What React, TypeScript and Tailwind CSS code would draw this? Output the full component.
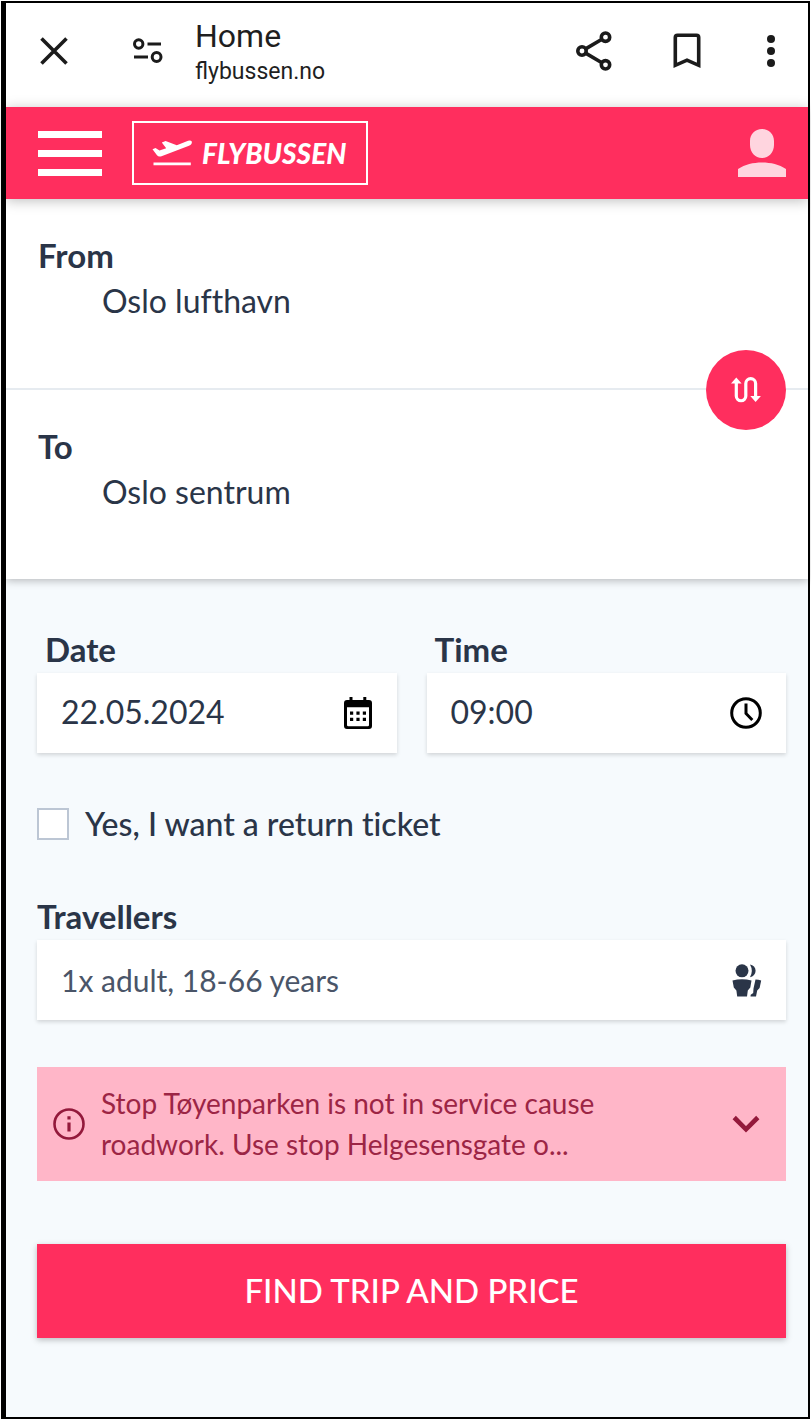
import { useState } from "react";
import type { ReactNode } from "react";

function CloseIcon() {
  return (
    <svg width="28" height="28" viewBox="0 0 28 28" fill="none" stroke="#1b1b1b" strokeWidth="3.6">
      <path d="M1.5 1.5l25 25M26.5 1.5l-25 25" />
    </svg>
  );
}

function SiteSettingsIcon() {
  return (
    <svg width="30" height="26" viewBox="0 0 30 26" fill="none" stroke="#1b1b1b" strokeWidth="3">
      <circle cx="5.7" cy="6" r="4.2" />
      <path d="M14.5 6H28M1 19h14" />
      <circle cx="23.6" cy="19" r="4.4" />
    </svg>
  );
}

function ShareIcon() {
  return (
    <svg width="36" height="40" viewBox="0 0 36 40" fill="none" stroke="#1b1b1b" strokeWidth="3.6">
      <circle cx="6" cy="20" r="4.2" />
      <circle cx="29.5" cy="6.2" r="4.2" />
      <circle cx="29.5" cy="33.8" r="4.2" />
      <path d="M9.6 17.9L25.9 8.3M9.6 22.1l16.3 9.6" />
    </svg>
  );
}

function BookmarkIcon() {
  return (
    <svg width="28" height="36" viewBox="0 0 28 36" fill="none" stroke="#1b1b1b" strokeWidth="3.6">
      <path d="M2.3 32.3V4.4Q2.3 2.2 4.5 2.2h19Q25.7 2.2 25.7 4.4v27.9L14 27.2z" />
    </svg>
  );
}

function MoreIcon() {
  return (
    <svg width="8" height="32" viewBox="0 0 8 32" fill="#1b1b1b">
      <circle cx="4" cy="4" r="4" />
      <circle cx="4" cy="16" r="4" />
      <circle cx="4" cy="28" r="4" />
    </svg>
  );
}

function PlaneIcon() {
  return (
    <svg width="42" height="28" viewBox="0 0 42 28" fill="#fff">
      <path d="M.5 10.200l3-1.200 4 2.600 6.700-2.300-4.400-5.800L13.600 2l11.200 4.200 9.400-3.800Q38.500.8 39.800 2.400q.6 2.600-2.800 4.400L9.500 17.200Q6.500 18.200 4.800 16z" />
      <path d="M1.500 23.500h37.300v2.800H1.500z" />
    </svg>
  );
}

function UserIcon() {
  return (
    <svg width="48" height="48" viewBox="0 0 48 48" fill="#ffd5df">
      <path d="M24 0c7 0 12 5 12 12v4c0 7-5 13-12 13s-12-6-12-13v-4C12 5 17 0 24 0zM0 40c7-4.500 15-6.500 24-6.500S41 35.500 48 40v8H0z" />
    </svg>
  );
}

function SwapIcon() {
  return (
    <svg width="30" height="26" viewBox="0 0 30 26">
      <path
        d="M5.300 4v15a4.700 4.700 0 0 0 9.500 0V6.500a4.900 4.900 0 0 1 9.800 0V21"
        fill="none"
        stroke="#fff"
        strokeWidth="3.200"
      />
      <path d="M0 6.500L5.300.5 10.600 6.500zM19.300 19h10.600L24.600 25z" fill="#fff" />
    </svg>
  );
}

function CalendarIcon() {
  return (
    <svg width="30" height="32" viewBox="0 0 30 32">
      <path
        fillRule="evenodd"
        d="M6.500 0h3v3h10.800V0h3v3H26a3 3 0 0 1 3 3v23a3 3 0 0 1-3 3H4a3 3 0 0 1-3-3V6a3 3 0 0 1 3-3h2.500zM4 10.300V28q0 1.200 1.200 1.200h19.600Q26 29.200 26 28V10.300z"
      />
      <path d="M7 14.500h3.200v3.200H7zM13.400 14.500h3.200v3.200h-3.200zM19.800 14.500H23v3.200h-3.200zM7 20.700h3.200v3.200H7zM13.400 20.700h3.200v3.200h-3.200zM19.800 20.700H23v3.200h-3.200z" />
    </svg>
  );
}

function ClockIcon() {
  return (
    <svg width="32" height="32" viewBox="0 0 32 32" fill="none" stroke="#000" strokeWidth="3">
      <circle cx="16" cy="16" r="14.300" />
      <path d="M16 6.500v10l6.300 6.500" />
    </svg>
  );
}

function TravellersIcon() {
  return (
    <svg width="30" height="33" viewBox="0 0 30 33" fill="#2a3548">
      <circle cx="10" cy="6.800" r="6.500" />
      <path d="M18 .5a6.400 6.400 0 0 1 0 12.700q3.600-6.400 0-12.700z" />
      <path d="M.5 16.400Q10 14.200 19.500 16.400L18.300 23.500 15.800 26.500 15 32.500H5.200L4.400 26.500 1.800 23.500z" />
      <path d="M23.500 15.500q3 0 5.700 1L27.600 24l-2.400 2.500-1.200 6h-5.500l.2-1.800 2.500-1.700.3-4.500z" />
    </svg>
  );
}

function InfoIcon() {
  return (
    <svg width="32" height="32" viewBox="0 0 32 32" className="shrink-0" fill="none" stroke="#93193b">
      <circle cx="16" cy="16" r="14.500" strokeWidth="2.600" />
      <path d="M16 14.500v9M16 8.200v3.300" strokeWidth="3.200" />
    </svg>
  );
}

function ChevronIcon() {
  return (
    <svg width="28" height="18" viewBox="0 0 28 18" fill="none" stroke="#93193b" strokeWidth="4.600">
      <path d="M2.200 2.500L14 14.300 25.800 2.500" />
    </svg>
  );
}

function StopField({ id, label, stop }: { id: string; label: string; stop: string }) {
  return (
    <div className="flex flex-col gap-1.5 pt-9 pb-[67px] pl-8 pr-28">
      <label htmlFor={id} className="text-[33px] leading-10 font-bold">
        {label}
      </label>
      <input
        id={id}
        defaultValue={stop}
        className="h-10 w-full min-w-0 bg-transparent pl-16 text-[32px] outline-none"
      />
    </div>
  );
}

function PickerField({
  id,
  label,
  value,
  icon,
}: {
  id: string;
  label: string;
  value: string;
  icon: ReactNode;
}) {
  return (
    <div className="min-w-0 flex-1">
      <label htmlFor={id} className="mb-1 block px-2 text-[33px] leading-10 font-bold">
        {label}
      </label>
      <div className="flex h-20 items-center bg-white px-6 shadow-[0_2px_4px_rgba(0,0,0,0.15)]">
        <input
          id={id}
          defaultValue={value}
          className="h-full min-w-0 flex-1 bg-transparent pb-1 text-[32px] outline-none"
        />
        {icon}
      </div>
    </div>
  );
}

export default function App() {
  const [wantsReturn, setWantsReturn] = useState(false);

  return (
    <div className="flex min-h-screen bg-white p-px">
      <div className="flex min-w-0 flex-1 flex-col border-2 border-l-[5px] border-black bg-[#f6fafd] font-['Lato',sans-serif] text-[#2a3548] [font-variant-ligatures:none]">
        {/* Browser bar */}
        <div className="flex items-center bg-white pt-3 pb-5 pl-[34px] pr-[33px] font-['Roboto',sans-serif] text-[#1f1f1f] [font-variant-ligatures:normal]">
          <button type="button" aria-label="Close">
            <CloseIcon />
          </button>
          <button type="button" aria-label="Site settings" className="ml-[65px]">
            <SiteSettingsIcon />
          </button>
          <div className="ml-8 flex-1">
            <p className="text-[32px] leading-[42px]">Home</p>
            <p className="text-[23px] leading-[30px]">flybussen.no</p>
          </div>
          <div className="flex items-center">
            <button type="button" aria-label="Share" className="mr-[61px]">
              <ShareIcon />
            </button>
            <button type="button" aria-label="Bookmark" className="mr-[66px]">
              <BookmarkIcon />
            </button>
            <button type="button" aria-label="More">
              <MoreIcon />
            </button>
          </div>
        </div>

        {/* Site header */}
        <header className="relative z-10 flex items-center bg-[#ff2e5e] py-3.5 pl-8 pr-[22px] shadow-[0_2px_12px_rgba(0,0,0,0.25)]">
          <button type="button" aria-label="Menu" className="flex w-16 flex-col gap-3">
            <span className="h-[7px] bg-white" />
            <span className="h-[7px] bg-white" />
            <span className="h-[7px] bg-white" />
          </button>
          <a
            href="#"
            className="ml-[30px] flex h-16 items-center gap-2 border-2 border-white pl-[18px] pr-5 text-white"
          >
            <PlaneIcon />
            <span className="text-[28px] leading-8 font-black italic">FLYBUSSEN</span>
          </a>
          <button type="button" aria-label="Account" className="ml-auto">
            <UserIcon />
          </button>
        </header>

        {/* Route */}
        <section className="bg-white shadow-[0_2px_8px_rgba(0,0,0,0.25)]">
          <StopField id="from" label="From" stop="Oslo lufthavn" />
          <div className="relative border-t-2 border-[#e6ebf0]">
            <button
              type="button"
              aria-label="Swap stops"
              className="absolute -top-10 right-[22px] flex size-20 items-center justify-center rounded-full bg-[#ff2e5e]"
            >
              <SwapIcon />
            </button>
            <StopField id="to" label="To" stop="Oslo sentrum" />
          </div>
        </section>

        {/* Trip options */}
        <form className="flex flex-col pt-[50px] pb-16 pl-[31px] pr-[22px]">
          <div className="flex gap-[30px]">
            <PickerField id="date" label="Date" value="22.05.2024" icon={<CalendarIcon />} />
            <PickerField id="time" label="Time" value="09:00" icon={<ClockIcon />} />
          </div>

          <label className="mt-[55px] flex items-center gap-4 text-[32px] leading-8 font-medium">
            <input
              type="checkbox"
              checked={wantsReturn}
              onChange={(e) => setWantsReturn(e.target.checked)}
              className="size-8 appearance-none border-2 border-[#bcc6d4] bg-white checked:bg-[#ff2e5e]"
            />
            Yes, I want a return ticket
          </label>

          <label htmlFor="travellers" className="mt-14 mb-1 text-[33px] leading-10 font-bold">
            Travellers
          </label>
          <button
            id="travellers"
            type="button"
            className="flex h-20 items-center justify-between bg-white px-6 text-[30px] text-[#4a5568] shadow-[0_2px_4px_rgba(0,0,0,0.15)]"
          >
            1x adult, 18-66 years
            <TravellersIcon />
          </button>

          <div className="mt-[47px] flex items-center gap-4 bg-[#ffb6c8] py-4 pl-4 pr-[26px] text-[#9c2545]">
            <InfoIcon />
            <p className="text-[28px] leading-[41px]">
              Stop Tøyenparken is not in service cause
              <br />
              roadwork. Use stop Helgesensgate o...
            </p>
            <button type="button" aria-label="Show full message" className="ml-auto">
              <ChevronIcon />
            </button>
          </div>

          <button
            type="button"
            className="mt-[63px] h-[94px] bg-[#ff2e5e] text-[33px] font-medium text-white shadow-[0_2px_6px_rgba(0,0,0,0.25)]"
          >
            FIND TRIP AND PRICE
          </button>
        </form>
      </div>
    </div>
  );
}
